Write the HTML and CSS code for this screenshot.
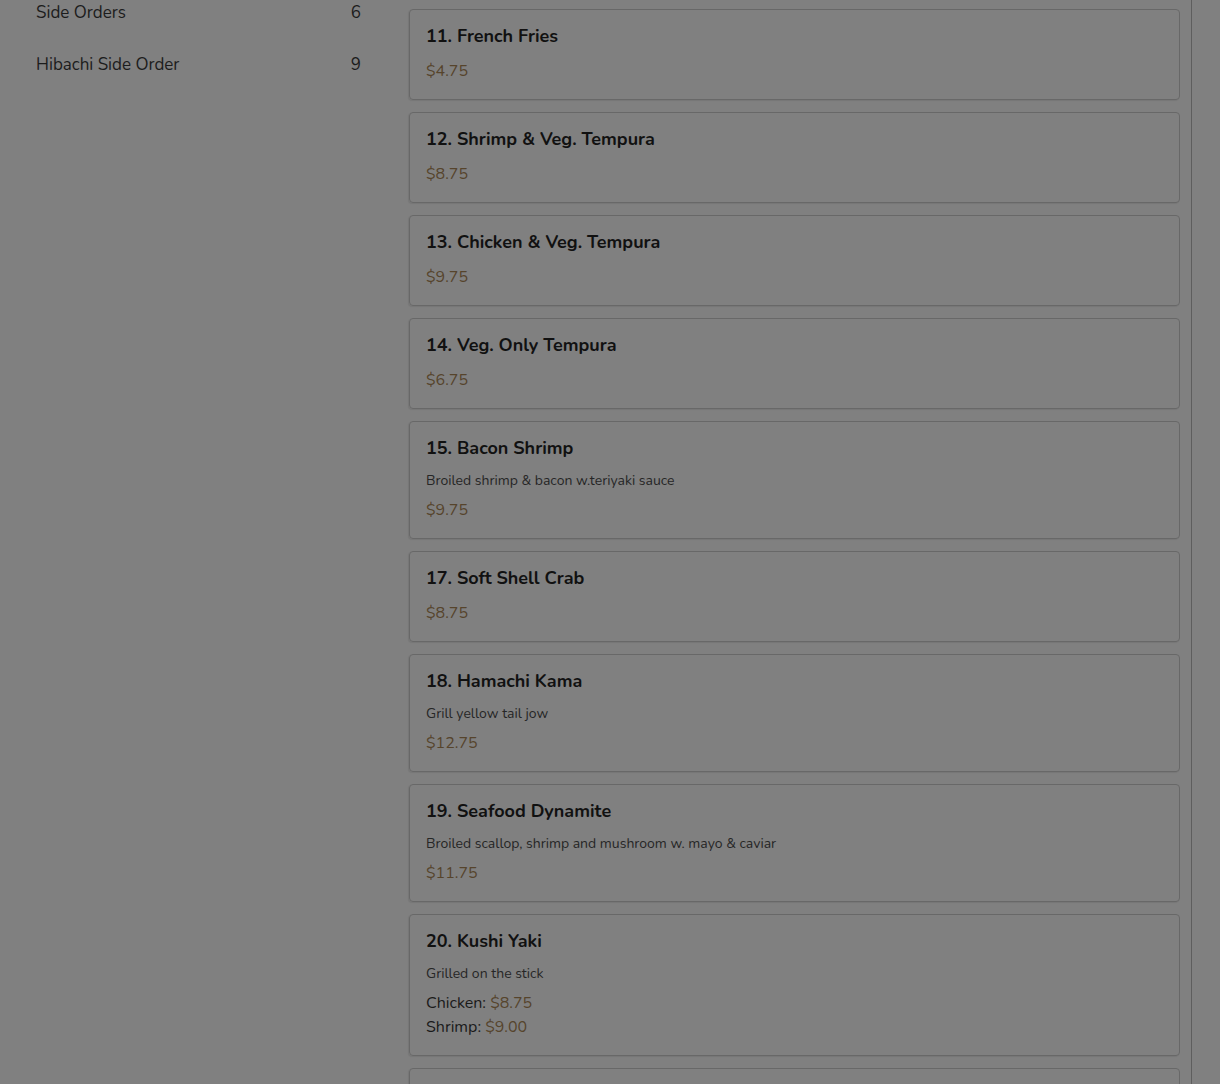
FILE: index.html
```html
<!DOCTYPE html>
<html>
<head>
<meta charset="utf-8">
<link rel="stylesheet" href="styles.css">
</head>
<body>
<div class="page">
  <aside class="sidebar">
    <ul class="cats">
      <li class="cat"><span>Side Orders</span><span>6</span></li>
      <li class="cat"><span>Hibachi Side Order</span><span>9</span></li>
    </ul>
  </aside>
  <main class="menu">
    <div class="items">
      <div class="card"><h3 class="title">11. French Fries</h3><div class="price-line"><span class="price">$4.75</span></div></div>
      <div class="card"><h3 class="title">12. Shrimp &amp; Veg. Tempura</h3><div class="price-line"><span class="price">$8.75</span></div></div>
      <div class="card"><h3 class="title">13. Chicken &amp; Veg. Tempura</h3><div class="price-line"><span class="price">$9.75</span></div></div>
      <div class="card"><h3 class="title">14. Veg. Only Tempura</h3><div class="price-line"><span class="price">$6.75</span></div></div>
      <div class="card"><h3 class="title">15. Bacon Shrimp</h3><p class="desc">Broiled shrimp &amp; bacon w.teriyaki sauce</p><div class="price-line"><span class="price">$9.75</span></div></div>
      <div class="card"><h3 class="title">17. Soft Shell Crab</h3><div class="price-line"><span class="price">$8.75</span></div></div>
      <div class="card"><h3 class="title">18. Hamachi Kama</h3><p class="desc">Grill yellow tail jow</p><div class="price-line"><span class="price">$12.75</span></div></div>
      <div class="card"><h3 class="title">19. Seafood Dynamite</h3><p class="desc">Broiled scallop, shrimp and mushroom w. mayo &amp; caviar</p><div class="price-line"><span class="price">$11.75</span></div></div>
      <div class="card"><h3 class="title">20. Kushi Yaki</h3><p class="desc">Grilled on the stick</p><div class="price-line">Chicken: <span class="price">$8.75</span></div><div class="price-line">Shrimp: <span class="price">$9.00</span></div></div>
      <div class="card card-empty"></div>
    </div>
  </main>
</div>
</body>
</html>
```

FILE: styles.css
```css
html, body {
  margin: 0;
  padding: 0;
  background: #808080;
  height: 1084px;
  overflow: hidden;
}
body {
  font-family: "Nunito", Lato, "Noto Sans", sans-serif;
  color: #151515;
}
.page {
  display: flex;
  align-items: flex-start;
  gap: 24px;
}
.sidebar {
  width: 385px;
  box-sizing: border-box;
  padding: 0 24px 0 36px;
  flex-shrink: 0;
}
.cats {
  list-style: none;
  margin: -13px 0 0;
  padding: 0;
}
.cat {
  display: flex;
  justify-content: space-between;
  padding: 14px 0;
  font-size: 17px;
  line-height: 24px;
  color: #1c1c1c;
}
.menu {
  width: 782px;
  border-right: 1px solid #5e5e5e;
  height: 1084px;
}
.items {
  width: 771px;
  padding-top: 9px;
  display: flex;
  flex-direction: column;
  gap: 12px;
}
.card {
  border: 1px solid #686868;
  border-radius: 4px;
  padding: 15px 16px 16px 16px;
  box-shadow: -1px 1px 1px rgba(0,0,0,0.08);
}
.card-empty {
  height: 60px;
}
.title {
  margin: 0 0 12px;
  font-size: 18px;
  line-height: 22px;
  font-weight: 700;
  color: #111;
}
.desc {
  margin: 0 0 8px;
  font-size: 14px;
  line-height: 19px;
  color: #262626;
}
.price-line {
  font-size: 16px;
  line-height: 24px;
  color: #1a1a1a;
}
.price {
  color: #56442c;
}
```
